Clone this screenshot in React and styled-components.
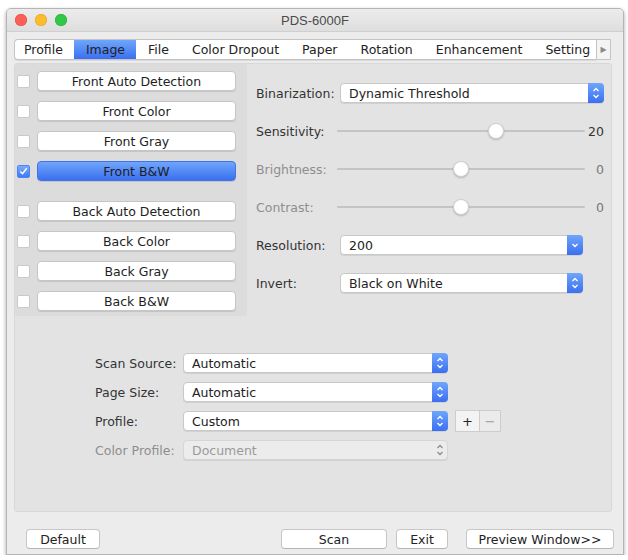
import React from "react";
import styled, { createGlobalStyle } from "styled-components";

const GlobalStyle = createGlobalStyle`
	body {
		margin: 0;
		background: #ffffff;
		font-family: "DejaVu Sans", "Liberation Sans", sans-serif;
		font-size: 12.5px;
		color: #262626;
	}
`;

const tabs = ["Profile", "Image", "File", "Color Dropout", "Paper", "Rotation", "Enhancement", "Setting"];

const frontModes = ["Front Auto Detection", "Front Color", "Front Gray", "Front B&W"];
const backModes = ["Back Auto Detection", "Back Color", "Back Gray", "Back B&W"];

const Stepper = ({ single, disabled }) => (
	<StepBox $disabled={disabled}>
		<svg width="16" height="20" viewBox="0 0 16 20">
			{single ? (
				<polyline points="5.5,9 8,11.5 10.5,9" fill="none" stroke="#fff" strokeWidth="1.4" />
			) : (
				<>
					<polyline
						points="5.5,8 8,5.5 10.5,8"
						fill="none"
						stroke={disabled ? "#8d8d8d" : "#fff"}
						strokeWidth="1.3"
					/>
					<polyline
						points="5.5,12 8,14.5 10.5,12"
						fill="none"
						stroke={disabled ? "#8d8d8d" : "#fff"}
						strokeWidth="1.3"
					/>
				</>
			)}
		</svg>
	</StepBox>
);

const Select = ({ value, width, single, disabled }) => (
	<SelectBox $width={width} $disabled={disabled}>
		<span>{value}</span>
		<Stepper single={single} disabled={disabled} />
	</SelectBox>
);

const Slider = ({ label, value, pos, disabled }) => (
	<Row>
		<SliderLabel $disabled={disabled}>{label}</SliderLabel>
		<Track>
			<Knob style={{ left: `${pos}%` }} />
		</Track>
		<Value $disabled={disabled}>{value}</Value>
	</Row>
);

const App = () => {
	return (
		<Page>
			<GlobalStyle />
			<Window>
				<TitleBar>
					<Lights>
						<Light $color="#fc5f57" $edge="#de4740" />
						<Light $color="#fdbc2e" $edge="#dea123" />
						<Light $color="#33c748" $edge="#27aa35" />
					</Lights>
					<Title>PDS-6000F</Title>
				</TitleBar>
				<Body>
					<TabBar>
						<TabStrip>
							{tabs.map((t) => (
								<Tab key={t} $active={t === "Image"}>
									{t}
								</Tab>
							))}
						</TabStrip>
						<TabArrow>&#9654;</TabArrow>
					</TabBar>
					<Content>
						<Top>
							<ModePanel>
								<ModeGroup>
									{frontModes.map((m) => (
										<ModeRow key={m}>
											<Check $checked={m === "Front B&W"}>
												{m === "Front B&W" && (
													<svg width="12" height="12" viewBox="0 0 12 12">
														<polyline
															points="2.5,6.5 5,9 9.5,3"
															fill="none"
															stroke="#fff"
															strokeWidth="1.6"
														/>
													</svg>
												)}
											</Check>
											<ModeButton $active={m === "Front B&W"}>{m}</ModeButton>
										</ModeRow>
									))}
								</ModeGroup>
								<ModeGroup>
									{backModes.map((m) => (
										<ModeRow key={m}>
											<Check />
											<ModeButton>{m}</ModeButton>
										</ModeRow>
									))}
								</ModeGroup>
							</ModePanel>
							<Settings>
								<Row>
									<Label>Binarization:</Label>
									<Select value="Dynamic Threshold" width={264} />
								</Row>
								<Slider label="Sensitivity:" value="20" pos={64} />
								<Slider label="Brightness:" value="0" pos={50} disabled />
								<Slider label="Contrast:" value="0" pos={50} disabled />
								<Row>
									<Label>Resolution:</Label>
									<Select value="200" width={243} single />
								</Row>
								<Row>
									<Label>Invert:</Label>
									<Select value="Black on White" width={243} />
								</Row>
							</Settings>
						</Top>
						<Form>
							<FormRow>
								<FormLabel>Scan Source:</FormLabel>
								<Select value="Automatic" width={265} />
							</FormRow>
							<FormRow>
								<FormLabel>Page Size:</FormLabel>
								<Select value="Automatic" width={265} />
							</FormRow>
							<FormRow>
								<FormLabel>Profile:</FormLabel>
								<Select value="Custom" width={265} />
								<SquareButtons>
									<Square>+</Square>
									<Square $dim>&minus;</Square>
								</SquareButtons>
							</FormRow>
							<FormRow>
								<FormLabel $disabled>Color Profile:</FormLabel>
								<Select value="Document" width={265} disabled />
							</FormRow>
						</Form>
					</Content>
					<Footer>
						<PushButton $width={74}>Default</PushButton>
						<FooterRight>
							<PushButton $width={106}>Scan</PushButton>
							<PushButton $width={52}>Exit</PushButton>
							<PushButton $width={148} $gap={18}>
								Preview Window&gt;&gt;
							</PushButton>
						</FooterRight>
					</Footer>
				</Body>
			</Window>
		</Page>
	);
};

const Page = styled.div`
	padding: 8px 4px 0 6px;
	width: 628px;
	box-sizing: border-box;
`;

const Window = styled.div`
	width: 618px;
	height: 547px;
	box-sizing: border-box;
	border: 1px solid #b4b4b4;
	border-radius: 5px 5px 0 0;
	background: #ececec;
	box-shadow: 0 2px 4px rgba(0, 0, 0, 0.35);
	display: flex;
	flex-direction: column;
	overflow: hidden;
`;

const TitleBar = styled.div`
	height: 22px;
	display: flex;
	align-items: center;
	background: linear-gradient(#ececec, #dedede);
	border-bottom: 1px solid #cfcfcf;
`;

const Lights = styled.div`
	display: flex;
	gap: 8px;
	padding-left: 8px;
	width: 60px;
`;

const Light = styled.span`
	width: 12px;
	height: 12px;
	border-radius: 50%;
	background: ${(p) => p.$color};
	box-shadow: inset 0 0 0 0.5px ${(p) => p.$edge};
`;

const Title = styled.div`
	flex: 1;
	text-align: center;
	margin-right: 68px;
	font-family: "Liberation Sans", sans-serif;
	font-size: 13px;
	color: #4a4a4a;
`;

const Body = styled.div`
	flex: 1;
	display: flex;
	flex-direction: column;
	padding: 0 11px 0 7px;
`;

const TabBar = styled.div`
	margin-top: 7px;
	display: flex;
	height: 21px;
	padding-right: 1px;
`;

const TabStrip = styled.div`
	width: 582px;
	display: flex;
	overflow: hidden;
	background: #fff;
	border: 1px solid #c4c4c4;
	border-right: none;
	border-radius: 4px 0 0 4px;
	box-sizing: border-box;
	box-shadow: 0 1px 0 rgba(0, 0, 0, 0.08);
`;

const Tab = styled.div`
	flex-shrink: 0;
	padding: 0 11px 0 12px;
	display: flex;
	align-items: center;
	white-space: nowrap;
	color: #222;
	background: ${(p) => (p.$active ? "linear-gradient(#6fa6fb, #3b6ff0)" : "transparent")};

	&:first-child {
		padding-left: 9px;
	}
`;

const TabArrow = styled.div`
	width: 15px;
	box-sizing: border-box;
	border: 1px solid #c4c4c4;
	background: #f4f4f4;
	color: #8c8c8c;
	font-size: 8px;
	display: flex;
	align-items: center;
	justify-content: center;
`;

const Content = styled.div`
	margin-top: 3px;
	height: 449px;
	box-sizing: border-box;
	background: #e3e3e3;
	border: 1px solid #d8d8d8;
	border-radius: 3px;
	display: flex;
	flex-direction: column;
`;

const Top = styled.div`
	display: flex;
`;

const ModePanel = styled.div`
	width: 232px;
	height: 252px;
	box-sizing: border-box;
	background: #dcdcdc;
	border-radius: 3px;
	padding: 7px 0 0 2px;
	display: flex;
	flex-direction: column;
	gap: 20px;
`;

const ModeGroup = styled.div`
	display: flex;
	flex-direction: column;
	gap: 10px;
`;

const ModeRow = styled.div`
	display: flex;
	align-items: center;
	gap: 7px;
	height: 20px;
`;

const Check = styled.span`
	width: 13px;
	height: 13px;
	box-sizing: border-box;
	border-radius: 2px;
	border: 1px solid ${(p) => (p.$checked ? "#4d84f5" : "#c9c9c9")};
	background: ${(p) => (p.$checked ? "linear-gradient(#79acfc, #4179f3)" : "#fff")};
	display: flex;
	align-items: center;
	justify-content: center;
`;

const ModeButton = styled.div`
	width: 199px;
	height: 20px;
	box-sizing: border-box;
	border-radius: 4px;
	border: 1px solid ${(p) => (p.$active ? "#3f72ec" : "#c6c6c6")};
	background: ${(p) => (p.$active ? "linear-gradient(#6fa6fb, #3b6ff0)" : "#fff")};
	box-shadow: 0 1px 0 rgba(0, 0, 0, 0.1);
	display: flex;
	align-items: center;
	justify-content: center;
	color: #1e1e1e;
`;

const Settings = styled.div`
	flex: 1;
	padding: 19px 0 0 9px;
	display: flex;
	flex-direction: column;
	gap: 18px;
`;

const Row = styled.div`
	display: flex;
	align-items: center;
	height: 20px;
`;

const Label = styled.div`
	width: 84px;
	color: #333;
`;

const SliderLabel = styled.div`
	width: 81px;
	color: ${(p) => (p.$disabled ? "#8e8e8e" : "#333")};
`;

const Track = styled.div`
	position: relative;
	width: 248px;
	height: 2px;
	background: #c4c4c4;
	border-radius: 1px;
`;

const Knob = styled.span`
	position: absolute;
	top: -7px;
	margin-left: -8px;
	width: 16px;
	height: 16px;
	box-sizing: border-box;
	border-radius: 50%;
	background: #fff;
	border: 1px solid #d0d0d0;
	box-shadow: 0 1px 2px rgba(0, 0, 0, 0.2);
`;

const Value = styled.div`
	width: 19px;
	text-align: right;
	color: ${(p) => (p.$disabled ? "#777" : "#333")};
`;

const SelectBox = styled.div`
	width: ${(p) => p.$width}px;
	height: 20px;
	box-sizing: border-box;
	border-radius: 4px;
	border: 1px solid ${(p) => (p.$disabled ? "#d6d6d6" : "#c8c8c8")};
	background: ${(p) => (p.$disabled ? "#ececec" : "#fff")};
	box-shadow: 0 1px 0 rgba(0, 0, 0, 0.08);
	display: flex;
	align-items: center;
	justify-content: space-between;
	color: ${(p) => (p.$disabled ? "#9a9a9a" : "#222")};

	span {
		padding-left: 8px;
	}
`;

const StepBox = styled.div`
	width: 16px;
	height: 20px;
	margin-right: -1px;
	border-radius: 0 4px 4px 0;
	background: ${(p) => (p.$disabled ? "transparent" : "linear-gradient(#6fa6fb, #3b6ff0)")};
	display: flex;
`;

const Form = styled.div`
	margin-top: 37px;
	padding-left: 80px;
	display: flex;
	flex-direction: column;
	gap: 9px;
`;

const FormRow = styled.div`
	display: flex;
	align-items: center;
	height: 20px;
`;

const FormLabel = styled.div`
	width: 88px;
	color: ${(p) => (p.$disabled ? "#8e8e8e" : "#333")};
`;

const SquareButtons = styled.div`
	display: flex;
	margin-left: 7px;
`;

const Square = styled.div`
	width: ${(p) => (p.$dim ? 22 : 25)}px;
	height: 22px;
	box-sizing: border-box;
	border: 1px solid #cdcdcd;
	margin-left: ${(p) => (p.$dim ? -1 : 0)}px;
	background: ${(p) => (p.$dim ? "#ebebeb" : "#f3f3f3")};
	color: ${(p) => (p.$dim ? "#9a9a9a" : "#222")};
	display: flex;
	align-items: center;
	justify-content: center;
	font-size: 13px;
`;

const Footer = styled.div`
	margin: 17px -2px 0 12px;
	display: flex;
	align-items: center;
`;

const FooterRight = styled.div`
	margin-left: auto;
	display: flex;
	gap: 9px;
`;

const PushButton = styled.div`
	width: ${(p) => p.$width}px;
	height: 20px;
	box-sizing: border-box;
	margin-left: ${(p) => (p.$gap ? p.$gap - 9 : 0)}px;
	border-radius: 4px;
	border: 1px solid #c6c6c6;
	border-bottom-color: #b4b4b4;
	background: #fff;
	display: flex;
	align-items: center;
	justify-content: center;
	color: #222;
`;

export default App;
